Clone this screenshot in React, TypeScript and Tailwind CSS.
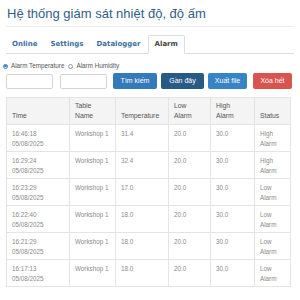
import React from 'react';

const rows = [
  { time: '16:46:18', date: '05/08/2025', temp: '31.4', status: 'High' },
  { time: '16:29:24', date: '05/08/2025', temp: '32.4', status: 'High' },
  { time: '16:23:29', date: '05/08/2025', temp: '17.0', status: 'Low' },
  { time: '16:22:40', date: '05/08/2025', temp: '18.0', status: 'Low' },
  { time: '16:21:29', date: '05/08/2025', temp: '18.0', status: 'Low' },
  { time: '16:17:13', date: '05/08/2025', temp: '18.0', status: 'Low' },
];

const tabs = ['Online', 'Settings', 'Datalogger', 'Alarm'];

const App = () => {
  return (
    <div className="w-[300px] h-[300px] overflow-hidden bg-white font-['Liberation_Sans',Arial,sans-serif]">
      <div className="px-[6px]">
        {/* Title */}
        <h1 className="pl-[1px] pt-[6px] pb-[4px] text-[13px] leading-[16px] text-[#2f5e88] border-b border-[#ececec]">
          Hệ thống giám sát nhiệt độ, độ ấm
        </h1>

        {/* Tabs */}
        <div className="mt-[8px] flex h-[19px] border-b border-[#dddddd] font-['DejaVu_Sans',Verdana,sans-serif] text-[7px] font-bold">
          {tabs.map((t) => (
            <div
              key={t}
              className={
                t === 'Alarm'
                  ? 'mr-[1px] -mb-px flex items-center px-[6px] bg-white border border-[#dddddd] border-b-white rounded-t-[2px] text-[#444]'
                  : 'mr-[1px] flex items-center px-[6px] text-[#3b6fa1]'
              }
            >
              {t}
            </div>
          ))}
        </div>

        {/* Radio options */}
        <div className="mt-[8px] flex items-center h-[8px] text-[6.3px] leading-[8px] text-[#555] -ml-[3px] whitespace-nowrap">
          <span className="shrink-0 w-[5px] h-[5px] rounded-full border border-[#2f7fd0] flex items-center justify-center">
            <span className="w-[2.5px] h-[2.5px] rounded-full bg-[#2f7fd0]" />
          </span>
          <span className="ml-[3px]">Alarm Temperature</span>
          <span className="shrink-0 ml-[4px] w-[5px] h-[5px] rounded-full border border-[#999]" />
          <span className="ml-[3px]">Alarm Humidity</span>
        </div>

        {/* Inputs and buttons */}
        <div className="mt-[3px] flex items-center text-[7px] text-white">
          <div className="w-[47px] h-[15px] border border-[#d4d4d4] rounded-[2px]" />
          <div className="ml-[7px] w-[47px] h-[15px] border border-[#d4d4d4] rounded-[2px]" />
          <div className="ml-[6px] w-[44px] h-[16px] rounded-[2px] bg-[#3479b9] flex items-center justify-center">Tìm kiếm</div>
          <div className="ml-[4px] w-[43px] h-[16px] rounded-[2px] bg-[#285a86] flex items-center justify-center">Gần đây</div>
          <div className="ml-[4px] w-[39px] h-[16px] rounded-[2px] bg-[#3684c6] flex items-center justify-center">Xuất file</div>
          <div className="ml-[6px] w-[39px] h-[16px] rounded-[2px] bg-[#d9534f] flex items-center justify-center">Xóa hết</div>
        </div>

        {/* Table */}
        <table className="mt-[8px] w-[284px] table-fixed border-collapse border border-[#e4e4e4]">
          <colgroup>
            <col className="w-[63px]" />
            <col className="w-[46px]" />
            <col className="w-[53px]" />
            <col className="w-[42px]" />
            <col className="w-[44px]" />
            <col className="w-[36px]" />
          </colgroup>
          <thead>
            <tr className="h-[27px] bg-[#f4f4f4] text-[6.8px] leading-[9.5px] text-[#555] text-left">
              <th className="font-normal align-bottom px-[5px] pb-[4px] border border-[#e4e4e4]">Time</th>
              <th className="font-normal align-bottom px-[5px] pb-[4px] border border-[#e4e4e4]">Table<br />Name</th>
              <th className="font-normal align-bottom px-[5px] pb-[4px] border border-[#e4e4e4]">Temperature</th>
              <th className="font-normal align-bottom px-[5px] pb-[4px] border border-[#e4e4e4]">Low<br />Alarm</th>
              <th className="font-normal align-bottom px-[5px] pb-[4px] border border-[#e4e4e4]">High<br />Alarm</th>
              <th className="font-normal align-bottom px-[5px] pb-[4px] border border-[#e4e4e4]">Status</th>
            </tr>
          </thead>
          <tbody className="text-[6.3px] leading-[9.5px] text-[#8a8a8a]">
            {rows.map((r, i) => (
              <tr key={i} className="h-[27px]">
                <td className="align-top px-[5px] pt-[4px] border border-[#e4e4e4]">{r.time}<br />{r.date}</td>
                <td className="align-top px-[5px] pt-[4px] border border-[#e4e4e4]">Workshop 1</td>
                <td className="align-top px-[5px] pt-[4px] border border-[#e4e4e4]">{r.temp}</td>
                <td className="align-top px-[5px] pt-[4px] border border-[#e4e4e4]">20.0</td>
                <td className="align-top px-[5px] pt-[4px] border border-[#e4e4e4]">30.0</td>
                <td className="align-top px-[5px] pt-[4px] border border-[#e4e4e4]">{r.status}<br />Alarm</td>
              </tr>
            ))}
          </tbody>
        </table>
      </div>
    </div>
  );
};

export default App;
